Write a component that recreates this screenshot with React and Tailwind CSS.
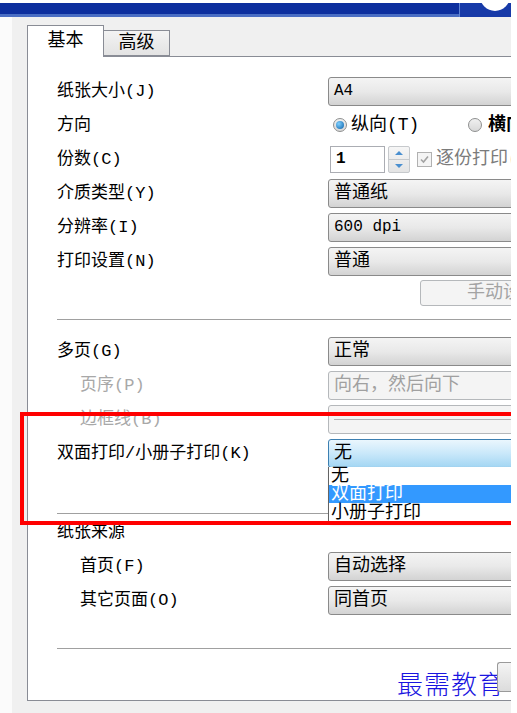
import React from "react";

const LABEL = "font-['Liberation_Mono','Noto_Sans_CJK_SC',monospace] text-[17px] leading-none";
const BOX = "font-['Liberation_Mono','Noto_Sans_CJK_SC',monospace] text-[18px] leading-none";

const Combo = ({ children, disabled, focused, line }) => {
  let look =
    "border-[#8a8a8a] bg-linear-to-b from-[#f4f4f4] via-[#e9e9e9] to-[#d3d3d3] text-black";
  if (disabled) look = "border-[#b5b8bb] bg-[#f4f4f4] text-[#a0a0a0]";
  if (focused) look = "border-[#3c7fb1] bg-linear-to-b from-[#eaf6fd] via-[#c9e8fa] to-[#a3d6f3] text-black";
  return (
    <div className={`h-[29px] w-[200px] shrink-0 rounded-[3px] border flex items-center pl-[5px] ${look} ${BOX}`}>
      {line ? <div className="h-px w-full bg-[#b4b4b4]" /> : children}
    </div>
  );
};

const Row = ({ label, indent, disabled, children }) => (
  <div className="h-[34px] flex items-center shrink-0">
    <div
      className={`w-[271px] shrink-0 ${indent ? "pl-[23px]" : ""} ${
        disabled ? "text-[#a8a8a8]" : "text-black"
      } ${LABEL}`}
    >
      {label}
    </div>
    {children}
  </div>
);

const Radio = ({ checked }) => (
  <div className="w-[14px] h-[14px] rounded-full border border-[#8e8f8f] bg-linear-to-b from-[#f0f0f0] to-[#d8d8d8] flex items-center justify-center shrink-0">
    {checked && <div className="w-[8px] h-[8px] rounded-full bg-[radial-gradient(circle_at_35%_35%,#7fd0ff,#0a5fa8)]" />}
  </div>
);

export default function App() {
  return (
    <div className="w-[517px] h-[713px] bg-white overflow-hidden relative">
      <div className="w-[511px] h-full flex flex-col overflow-hidden relative">
        {/* title bar */}
        <div className="h-[17px] flex flex-col shrink-0">
          <div className="h-[3px] bg-white" />
          <div className="flex-1 flex">
            <div className="flex-1 flex flex-col">
              <div className="flex-1 bg-[#0d2f9e]" />
              <div className="h-[3px] bg-[#4a6ec4]" />
            </div>
            <div className="w-[52px] border-l border-[#5f84d6] bg-[#173aa8] relative overflow-hidden">
              <div className="absolute left-[20px] top-[-22px] w-[30px] h-[30px] rounded-full bg-white" />
            </div>
          </div>
        </div>

        <div className="flex-1 flex min-h-0">
          <div className="w-[12px] shrink-0 bg-[#fbfbfb]" />
          <div className="flex-1 min-w-0 bg-[#f0f0f0] pl-[15px] flex flex-col">
            {/* tabs */}
            <div className="h-[39px] flex items-end shrink-0">
              <div className={`relative z-10 -mb-px w-[77px] h-[32px] bg-white border border-b-0 border-[#898c95] flex items-center justify-center pb-[2px] ${LABEL} text-[18px]`}>
                基本
              </div>
              <div className={`w-[66px] h-[26px] border border-l-0 border-[#898c95] bg-linear-to-b from-[#f3f3f3] to-[#e3e3e3] flex items-center justify-center ${LABEL} text-[18px]`}>
                高级
              </div>
            </div>

            {/* panel */}
            <div className="h-[645px] shrink-0 bg-white border border-r-0 border-[#898c95] pl-[29px] pt-[17px] flex flex-col overflow-hidden">
              <Row label="纸张大小(J)">
                <Combo>
                  <span className="text-[16px]">A4</span>
                </Combo>
              </Row>
              <Row label="方向">
                <div className={`flex items-center pl-[5px] shrink-0 whitespace-nowrap ${BOX}`}>
                  <Radio checked />
                  <span className="ml-[4px] w-[117px] shrink-0">纵向(T)</span>
                  <Radio />
                  <span className="ml-[6px] font-bold shrink-0">横向(L)</span>
                </div>
              </Row>
              <Row label="份数(C)">
                <div className="flex items-center pl-[2px] shrink-0">
                  <div className="w-[55px] h-[27px] shrink-0 border border-[#abadb3] bg-white flex items-center pl-[5px] font-['Liberation_Mono',monospace] text-[16px] font-bold">
                    1
                  </div>
                  <div className="ml-[3px] w-[22px] h-[27px] shrink-0 flex flex-col border border-[#c6c9cc] rounded-[2px] bg-linear-to-b from-[#f6f6f6] to-[#e4e4e4]">
                    <div className="flex-1 flex items-center justify-center border-b border-[#c6c9cc]">
                      <div className="w-0 h-0 border-x-[4px] border-x-transparent border-b-[4px] border-b-[#4a8fd0]" />
                    </div>
                    <div className="flex-1 flex items-center justify-center">
                      <div className="w-0 h-0 border-x-[4px] border-x-transparent border-t-[4px] border-t-[#4a8fd0]" />
                    </div>
                  </div>
                  <div className="ml-[7px] w-[15px] h-[15px] shrink-0 border border-[#b1b1b1] bg-[#f4f4f4] flex items-center justify-center">
                    <svg width="11" height="11" viewBox="0 0 11 11">
                      <path d="M2 5.5 L4.5 8 L9 2.5" fill="none" stroke="#a2a2a2" strokeWidth="1.6" />
                    </svg>
                  </div>
                  <span className={`ml-[4px] whitespace-nowrap text-[#7b7b7b] ${BOX}`}>逐份打印(L)</span>
                </div>
              </Row>
              <Row label="介质类型(Y)">
                <Combo>普通纸</Combo>
              </Row>
              <Row label="分辨率(I)">
                <Combo>
                  <span className="text-[16px]">600 dpi</span>
                </Combo>
              </Row>
              <Row label="打印设置(N)">
                <Combo>普通</Combo>
              </Row>
              <div className="mt-[2px] ml-[363px] h-[26px] w-[150px] shrink-0 rounded-[3px] border border-[#b5b8bb] bg-[#f4f4f4] flex items-center pl-[46px]">
                <span className={`text-[#a3a3a3] whitespace-nowrap ${BOX}`}>手动设置</span>
              </div>

              <div className="mt-[13px] border-t border-[#a0a0a0] shrink-0" />

              <div className="mt-[14px]" />
              <Row label="多页(G)">
                <Combo>正常</Combo>
              </Row>
              <Row label="页序(P)" indent disabled>
                <Combo disabled>
                  <span className="whitespace-nowrap">向右，然后向下</span>
                </Combo>
              </Row>
              <Row label="边框线(B)" indent disabled>
                <Combo disabled line />
              </Row>
              <Row label="双面打印/小册子打印(K)">
                <Combo focused>无</Combo>
              </Row>

              <div className="mt-[43px] border-t border-[#a0a0a0] shrink-0" />
              <div className="mt-px" />
              <Row label="纸张来源" />
              <Row label="首页(F)" indent>
                <Combo>自动选择</Combo>
              </Row>
              <Row label="其它页面(O)" indent>
                <Combo>同首页</Combo>
              </Row>

              <div className="mt-[31px] border-t border-[#a0a0a0] shrink-0" />
              <div className="flex-1 flex items-start justify-end">
                <div className="mt-[21px] text-[#1a14e0] text-[26px] tracking-[1px] leading-none font-['Noto_Sans_CJK_SC',serif] font-light whitespace-nowrap">
                  最需教育
                </div>
                <div className="mt-[13px] w-[14px] h-[30px] shrink-0 rounded-l-[3px] border border-r-0 border-[#9a9a9a] bg-linear-to-b from-[#f4f4f4] to-[#dcdcdc] -ml-[8px]" />
              </div>
            </div>
          </div>
        </div>

        {/* open dropdown list */}
        <div className="absolute left-[328px] top-[467px] w-[200px] h-[55px] bg-white border-l border-[#646464] shadow-[2px_2px_3px_rgba(0,0,0,0.25)] flex flex-col">
          <div className={`h-[18px] flex items-center pl-[2px] ${BOX}`}>无</div>
          <div className={`h-[18px] flex items-center pl-[2px] bg-[#3399ff] text-white ${BOX}`}>双面打印</div>
          <div className={`h-[19px] flex items-center pl-[2px] ${BOX}`}>小册子打印</div>
        </div>

        {/* red highlight frame */}
        <div className="absolute left-[20px] top-[412px] w-[520px] h-[113px] border-[4px] border-[#ff0000]" />
      </div>
    </div>
  );
}
